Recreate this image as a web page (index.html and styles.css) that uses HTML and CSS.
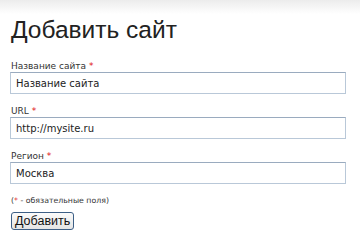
FILE: index.html
```html
<!DOCTYPE html>
<html lang="ru">

<head>
    <meta charset="UTF-8">
    <meta name="viewport" content="width=device-width, initial-scale=1.0">
    <link rel="stylesheet" href="styles.css">
    <title>Добавить сайт</title>
</head>

<body>
    <div class="page">
        <h1>Добавить сайт</h1>
        <form class="site-form">
            <div class="form-group">
                <label for="site-name">Название сайта <span class="req">*</span></label>
                <input type="text" id="site-name" value="Название сайта">
            </div>
            <div class="form-group">
                <label for="site-url">URL <span class="req">*</span></label>
                <input type="text" id="site-url" value="http://mysite.ru">
            </div>
            <div class="form-group">
                <label for="site-region">Регион <span class="req">*</span></label>
                <input type="text" id="site-region" value="Москва">
            </div>
            <p class="note">(<span class="req">*</span> - обязательные поля)</p>
            <button type="submit">Добавить</button>
        </form>
    </div>
</body>

</html>
```
FILE: styles.css
```css
html {
    background: #fff linear-gradient(#ececec, #fff 14px) no-repeat;
}

body {
    margin: 0;
    padding: 0;
    font-family: "DejaVu Sans", Verdana, sans-serif;
    color: #333;
}

.page {
    padding: 15px 10px 0 10px;
}

h1 {
    margin: 0 0 15px 1px;
    font-family: "Liberation Sans", Arial, sans-serif;
    font-size: 24.5px;
    font-weight: normal;
    line-height: 30px;
    color: #222;
}

.form-group {
    margin-bottom: 11px;
}

label {
    display: block;
    font-size: 9px;
    line-height: 12px;
    margin: 0 0 0 1px;
}

.req {
    color: #e01010;
}

input[type="text"] {
    display: block;
    box-sizing: border-box;
    width: 336px;
    height: 22px;
    margin: 0;
    padding: 0 5px;
    font-family: "DejaVu Sans", Verdana, sans-serif;
    font-size: 10px;
    color: #222;
    border: 1px solid #b9c8d8;
    border-top-color: #9aabbf;
    background: #fff;
}

.note {
    margin: 0 0 5px 1px;
    font-size: 7.8px;
    line-height: 12px;
}

button {
    display: block;
    margin-left: 1px;
    font-family: "Liberation Sans", Arial, sans-serif;
    font-size: 12.5px;
    height: 18px;
    padding: 0 3px;
    color: #111;
    border: 1px solid #3d5f86;
    border-radius: 3px;
    background: linear-gradient(#fbfbfb, #e4e4e4);
}
```
